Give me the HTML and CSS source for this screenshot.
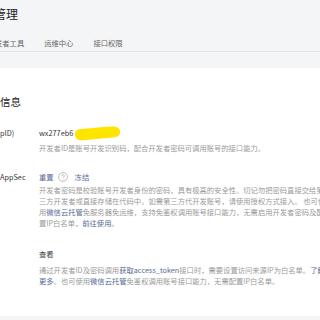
FILE: index.html
```html
<!DOCTYPE html>
<html lang="zh-CN">
<head>
  <meta charset="UTF-8" />
  <title>开发管理</title>
  <link rel="stylesheet" href="styles.css">
</head>
<body>
<header class="page-head">
  <h1 class="page-title">管理</h1>
  <nav class="tabs">
    <span class="tab">发者工具</span>
    <span class="tab">运维中心</span>
    <span class="tab">接口权限</span>
  </nav>
</header>
<div class="page-body">
  <main class="card">
    <h2 class="section-title">信息</h2>
    <div class="fields">
      <div class="field">
        <div class="field-label">pID)</div>
        <div class="field-body">
          <div class="field-main">
            <span class="app-id">wx277eb6</span>
            <svg class="mask" width="48" height="16" viewBox="0 0 48 16" aria-hidden="true">
              <path d="M2 9.5C1.5 5.5 5 4 9 4C19 3.2 31 1.6 41 1.6C46 1.8 47.6 5 47 8.5C46.4 12 41 12.6 35 13C25 13.6 15 15.2 7.5 15.2C3.5 15 2.4 12.6 2 9.5Z" fill="#ffe400"/>
            </svg>
          </div>
          <p class="desc desc-tight">开发者ID是账号开发识别码，配合开发者密码可调用账号的接口能力。</p>
        </div>
      </div>
      <div class="field">
        <div class="field-label">AppSec</div>
        <div class="field-body">
          <div class="field-main">
            <a class="link">重置</a>
            <svg class="help" width="10" height="10" viewBox="0 0 10 10" aria-hidden="true">
              <circle cx="5" cy="5" r="4.4" fill="none" stroke="#a5a5a5" stroke-width="0.7"/>
              <path d="M3.7 3.9a1.3 1.3 0 1 1 1.9 1.15c-.45.25-.6.5-.6 1.05" fill="none" stroke="#a5a5a5" stroke-width="0.7"/>
              <circle cx="5" cy="7.3" r="0.45" fill="#a5a5a5"/>
            </svg>
            <a class="link">冻结</a>
          </div>
          <p class="desc desc-flush">开发者密码是校验账号开发者身份的密码，具有极高的安全性。切记勿把密码直接交给第三方开发者或直接存储在代码中。如需第三方代开发账号，请使用授权方式接入。 也可使用<a class="link">微信云托管</a>免服务器免运维，支持免鉴权调用账号接口能力，无需启用开发者密码及配置IP白名单，<a class="link">前往使用</a>。</p>
        </div>
      </div>
      <div class="field field-wide">
        <div class="field-label"></div>
        <div class="field-body">
          <div class="field-main">
            <span class="plain">查看</span>
          </div>
          <p class="desc desc-loose">通过开发者ID及密码调用<a class="link">获取access_token</a>接口时，需要设置访问来源IP为白名单。<a class="link">了解更多</a>。也可使用<a class="link">微信云托管</a>免鉴权调用账号接口能力，无需配置IP白名单。</p>
        </div>
      </div>
    </div>
  </main>
</div>
</body>
</html>
```

FILE: styles.css
```css
html, body {
  margin: 0;
  padding: 0;
}
body {
  width: 320px;
  height: 320px;
  overflow: hidden;
  background: #f4f5f7;
  font-family: "Noto Sans CJK SC", sans-serif;
  color: #353535;
}
.page-head {
  padding-top: 8px;
  border-bottom: 1px solid #e3e5e9;
}
.page-title {
  margin: 0 0 0 -6px;
  font-size: 12px;
  line-height: 12px;
  font-weight: normal;
  color: #222;
}
.tabs {
  display: flex;
  gap: 20px;
  margin: 18px 0 0 -5px;
  padding-bottom: 3px;
  font-size: 7.3px;
  line-height: 10px;
  color: #666;
}
.page-body {
  padding-top: 16px;
}
.card {
  display: block;
  background: #fff;
  padding: 28px 0 29px;
}
.section-title {
  margin: 0;
  font-size: 10.5px;
  line-height: 12px;
  font-weight: normal;
  color: #222;
}
.fields {
  display: flex;
  flex-direction: column;
  gap: 16px;
  margin-top: 18px;
}
.field {
  display: grid;
  grid-template-columns: 39px 1fr;
}
.field-wide {
  margin-top: 2px;
}
.field-label {
  font-size: 7.3px;
  line-height: 14px;
  color: #353535;
  white-space: nowrap;
}
.field-main {
  display: flex;
  align-items: center;
  height: 14px;
  font-size: 7.3px;
  white-space: nowrap;
}
.app-id {
  color: #353535;
}
.mask {
  display: block;
  margin-left: 0;
}
.help {
  display: block;
  margin: 0 7px 0 4px;
}
.link {
  color: #576b95;
}
.plain {
  color: #3e3e3e;
}
.desc {
  width: 288px;
  margin: 0;
  font-size: 7.3px;
  line-height: 11px;
  color: #9a9a9a;
}
.desc-tight {
  margin-top: 3px;
}
.desc-flush {
  margin-top: 1px;
}
.desc-loose {
  margin-top: 4px;
}
```
